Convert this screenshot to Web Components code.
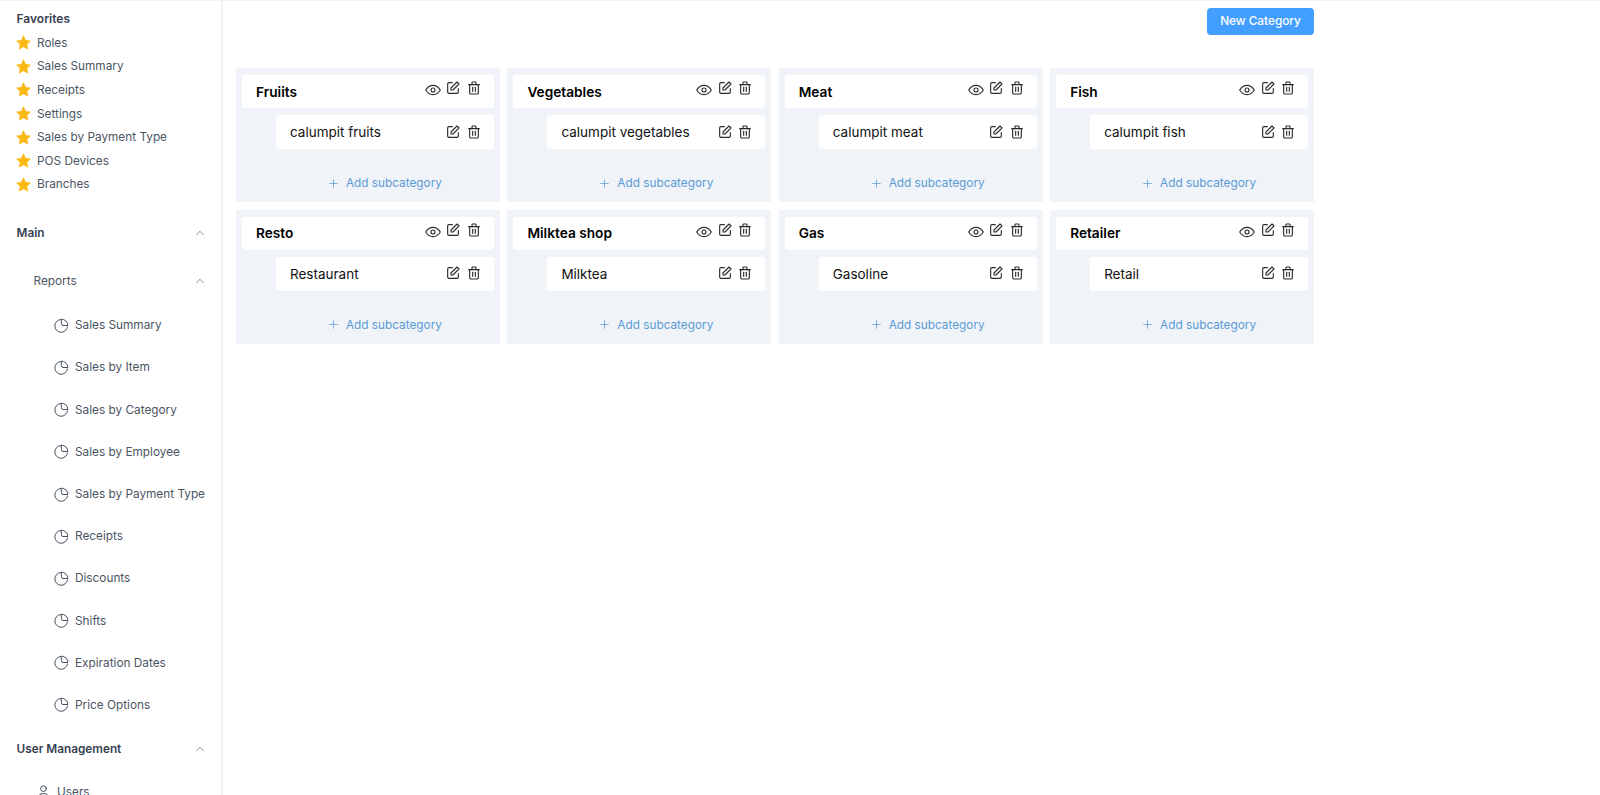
<!DOCTYPE html>
<html>
<head>
<meta charset="utf-8">
<style>
  html, body { margin: 0; height: 100%; overflow: hidden; background: #fff; }
  body { font-family: Inter, "Noto Sans", sans-serif; }
</style>
</head>
<body>
<app-shell>
  <side-bar slot="side"></side-bar>
  <category-page></category-page>
</app-shell>

<script>
const ICONS = {
  eye: '<circle cx="12" cy="12" r="3"/><path d="M23 12c-3 4.700-6.600 7-11 7s-8-2.300-11-7c3-4.700 6.600-7 11-7s8 2.300 11 7z"/>',
  edit: '<path d="M11 4H6a2 2 0 0 0-2 2v12a2 2 0 0 0 2 2h12a2 2 0 0 0 2-2v-5"/><path d="M18 3l3 3-9 9H9v-3z"/>',
  trash: '<path d="M4 7h16"/><path d="M10 11v6"/><path d="M14 11v6"/><path d="M5.500 7v12a2 2 0 0 0 2 2h9a2 2 0 0 0 2-2V7"/><path d="M9 7V4a1 1 0 0 1 1-1h4a1 1 0 0 1 1 1v3"/>',
  pie: '<path d="M10.500 3.600a9 9 0 1 0 10 10.400"/><path d="M12 3a9 9 0 0 1 9 9h-7a2 2 0 0 1-2-2z"/>',
  up: '<path d="M6 15l6-6 6 6"/>',
  plus: '<path d="M12 5v14"/><path d="M5 12h14"/>',
  user: '<circle cx="12" cy="8" r="4"/><path d="M6 21v-2a4 4 0 0 1 4-4h4a4 4 0 0 1 4 4v2"/>'
};

function icon(name, size, width) {
  return `<svg width="${size}" height="${size}" viewBox="0 0 24 24" fill="none" stroke="currentColor" stroke-width="${width}" stroke-linecap="round" stroke-linejoin="round">${ICONS[name]}</svg>`;
}

const STAR = '<svg width="17" height="17" viewBox="0 0 24 24" fill="#fbb917"><path d="M12 1.500l3.300 6.900 7.400 1-5.400 5.200 1.300 7.500-6.600-3.600-6.600 3.600 1.300-7.500-5.400-5.200 7.400-1z"/></svg>';

class AppShell extends HTMLElement {
  constructor() {
    super();
    this.attachShadow({ mode: "open" });
    this.shadowRoot.innerHTML = `
      <style>
        :host { display: flex; height: 795px; overflow: hidden; box-sizing: border-box; border-top: 1px solid #f1f3f7; }
        main { flex: 1; min-width: 0; }
        ::slotted([slot="side"]) { flex: none; }
      </style>
      <slot name="side"></slot>
      <main><slot></slot></main>
    `;
  }
}

class FavItem extends HTMLElement {
  constructor() {
    super();
    this.attachShadow({ mode: "open" });
    this.shadowRoot.innerHTML = `
      <style>
        :host { display: flex; align-items: center; gap: 5.500px; height: 23.6px; font-size: 11.8px; color: #4b5563; }
        span { display: flex; width: 17px; margin-left: -2px; }
      </style>
      <span>${STAR}</span><slot></slot>
    `;
  }
}

class NavGroup extends HTMLElement {
  constructor() {
    super();
    this.attachShadow({ mode: "open" });
    this.shadowRoot.innerHTML = `
      <style>
        :host { display: flex; align-items: center; justify-content: space-between; font-size: 11.8px; color: #4b5563; }
        :host([main]) { font-weight: 600; color: #374151; }
        span { display: flex; color: #6b7280; }
      </style>
      <slot></slot><span>${icon("up", 14, 1.4)}</span>
    `;
  }
}

class NavLink extends HTMLElement {
  constructor() {
    super();
    this.attachShadow({ mode: "open" });
    const name = this.getAttribute("icon") || "pie";
    this.shadowRoot.innerHTML = `
      <style>
        :host { display: flex; align-items: center; gap: 5.500px; height: 42.2px; padding-left: 36px; font-size: 11.8px; color: #4b5563; white-space: nowrap; }
        span { display: flex; color: #374151; }
      </style>
      <span>${icon(name, 17, 1.3)}</span><slot></slot>
    `;
  }
}

class SideBar extends HTMLElement {
  constructor() {
    super();
    this.attachShadow({ mode: "open" });
    const favs = ["Roles", "Sales Summary", "Receipts", "Settings", "Sales by Payment Type", "POS Devices", "Branches"];
    const reports = ["Sales Summary", "Sales by Item", "Sales by Category", "Sales by Employee", "Sales by Payment Type", "Receipts", "Discounts", "Shifts", "Expiration Dates", "Price Options"];
    this.shadowRoot.innerHTML = `
      <style>
        :host { display: block; width: 223px; height: 794px; box-sizing: border-box; padding: 10px 14px 0 16.500px; border-right: 2px solid #eef0f5; overflow: hidden; }
        h4 { margin: 0 0 4px; font-size: 12px; line-height: 16px; font-weight: 600; color: #374151; }
        nav-group.m1 { margin-top: 30px; }
        nav-group.m2 { margin-top: 34px; padding-left: 17px; }
        .links { margin-top: 16px; }
        nav-group.m3 { margin-top: 15.500px; }
        .users { margin-top: 15px; }
        .users nav-link { padding-left: 18px; }
      </style>
      <h4>Favorites</h4>
      ${favs.map(f => `<fav-item>${f}</fav-item>`).join("")}
      <nav-group class="m1" main>Main</nav-group>
      <nav-group class="m2">Reports</nav-group>
      <div class="links">${reports.map(r => `<nav-link>${r}</nav-link>`).join("")}</div>
      <nav-group class="m3" main>User Management</nav-group>
      <div class="users"><nav-link icon="user">Users</nav-link></div>
    `;
  }
}

class IconBtn extends HTMLElement {
  constructor() {
    super();
    this.attachShadow({ mode: "open" });
    this.shadowRoot.innerHTML = `
      <style>:host { display: flex; color: #2b2b2b; }</style>
      ${icon(this.getAttribute("name"), this.getAttribute("size") || 16, 1.7)}
    `;
  }
}

class SubRow extends HTMLElement {
  constructor() {
    super();
    this.attachShadow({ mode: "open" });
    this.shadowRoot.innerHTML = `
      <style>
        :host { display: flex; align-items: center; justify-content: space-between; height: 34px; margin-left: 34px; padding: 0 12px 0 14px; background: #fff; border-radius: 3px; font-size: 13.500px; color: #111; }
        div { display: flex; gap: 4.500px; margin-top: -1px; }
      </style>
      <slot></slot>
      <div><icon-btn name="edit"></icon-btn><icon-btn name="trash"></icon-btn></div>
    `;
  }
}

class CategoryCard extends HTMLElement {
  constructor() {
    super();
    this.attachShadow({ mode: "open" });
    this.shadowRoot.innerHTML = `
      <style>
        :host { display: block; height: 134px; box-sizing: border-box; padding: 7px 6px; background: #f0f3f8; }
        header { display: flex; align-items: center; justify-content: space-between; height: 33px; padding: 0 12px 0 14px; background: #fff; border-radius: 3px; font-size: 13.700px; font-weight: 600; color: #000; }
        .acts { display: flex; align-items: center; gap: 4.500px; margin-top: -7px; }
        .eye { margin-top: 4px; }
        sub-row { margin-top: 7px; }
        .add { display: flex; align-items: center; justify-content: center; gap: 6px; margin: 27px 0 0 33px; font-size: 11.800px; color: #5b9bd5; }
        .add svg { display: block; }
      </style>
      <header>
        <span>${this.getAttribute("title")}</span>
        <div class="acts">
          <icon-btn class="eye" name="eye"></icon-btn>
          <icon-btn name="edit"></icon-btn>
          <icon-btn name="trash"></icon-btn>
        </div>
      </header>
      <sub-row>${this.getAttribute("sub")}</sub-row>
      <div class="add">${icon("plus", 13, 1.4)}<span>Add subcategory</span></div>
    `;
  }
}

class CategoryPage extends HTMLElement {
  constructor() {
    super();
    this.attachShadow({ mode: "open" });
    const cats = [
      ["Fruiits", "calumpit fruits"], ["Vegetables", "calumpit vegetables"], ["Meat", "calumpit meat"], ["Fish", "calumpit fish"],
      ["Resto", "Restaurant"], ["Milktea shop", "Milktea"], ["Gas", "Gasoline"], ["Retailer", "Retail"]
    ];
    this.shadowRoot.innerHTML = `
      <style>
        :host { display: block; width: 1078px; margin-left: 13px; padding-top: 6.500px; }
        .top { display: flex; justify-content: flex-end; }
        button { height: 27px; width: 107px; padding: 0; border: 0; border-radius: 4px; background: #429eff; color: #fff; font: 500 11.800px Inter, sans-serif; }
        .grid { display: grid; grid-template-columns: repeat(4, 1fr); gap: 7.500px; margin-top: 33.500px; }
      </style>
      <div class="top"><button>New Category</button></div>
      <div class="grid">
        ${cats.map(c => `<category-card title="${c[0]}" sub="${c[1]}"></category-card>`).join("")}
      </div>
    `;
  }
}

customElements.define("icon-btn", IconBtn);
customElements.define("sub-row", SubRow);
customElements.define("category-card", CategoryCard);
customElements.define("category-page", CategoryPage);
customElements.define("fav-item", FavItem);
customElements.define("nav-group", NavGroup);
customElements.define("nav-link", NavLink);
customElements.define("side-bar", SideBar);
customElements.define("app-shell", AppShell);
</script>
</body>
</html>
